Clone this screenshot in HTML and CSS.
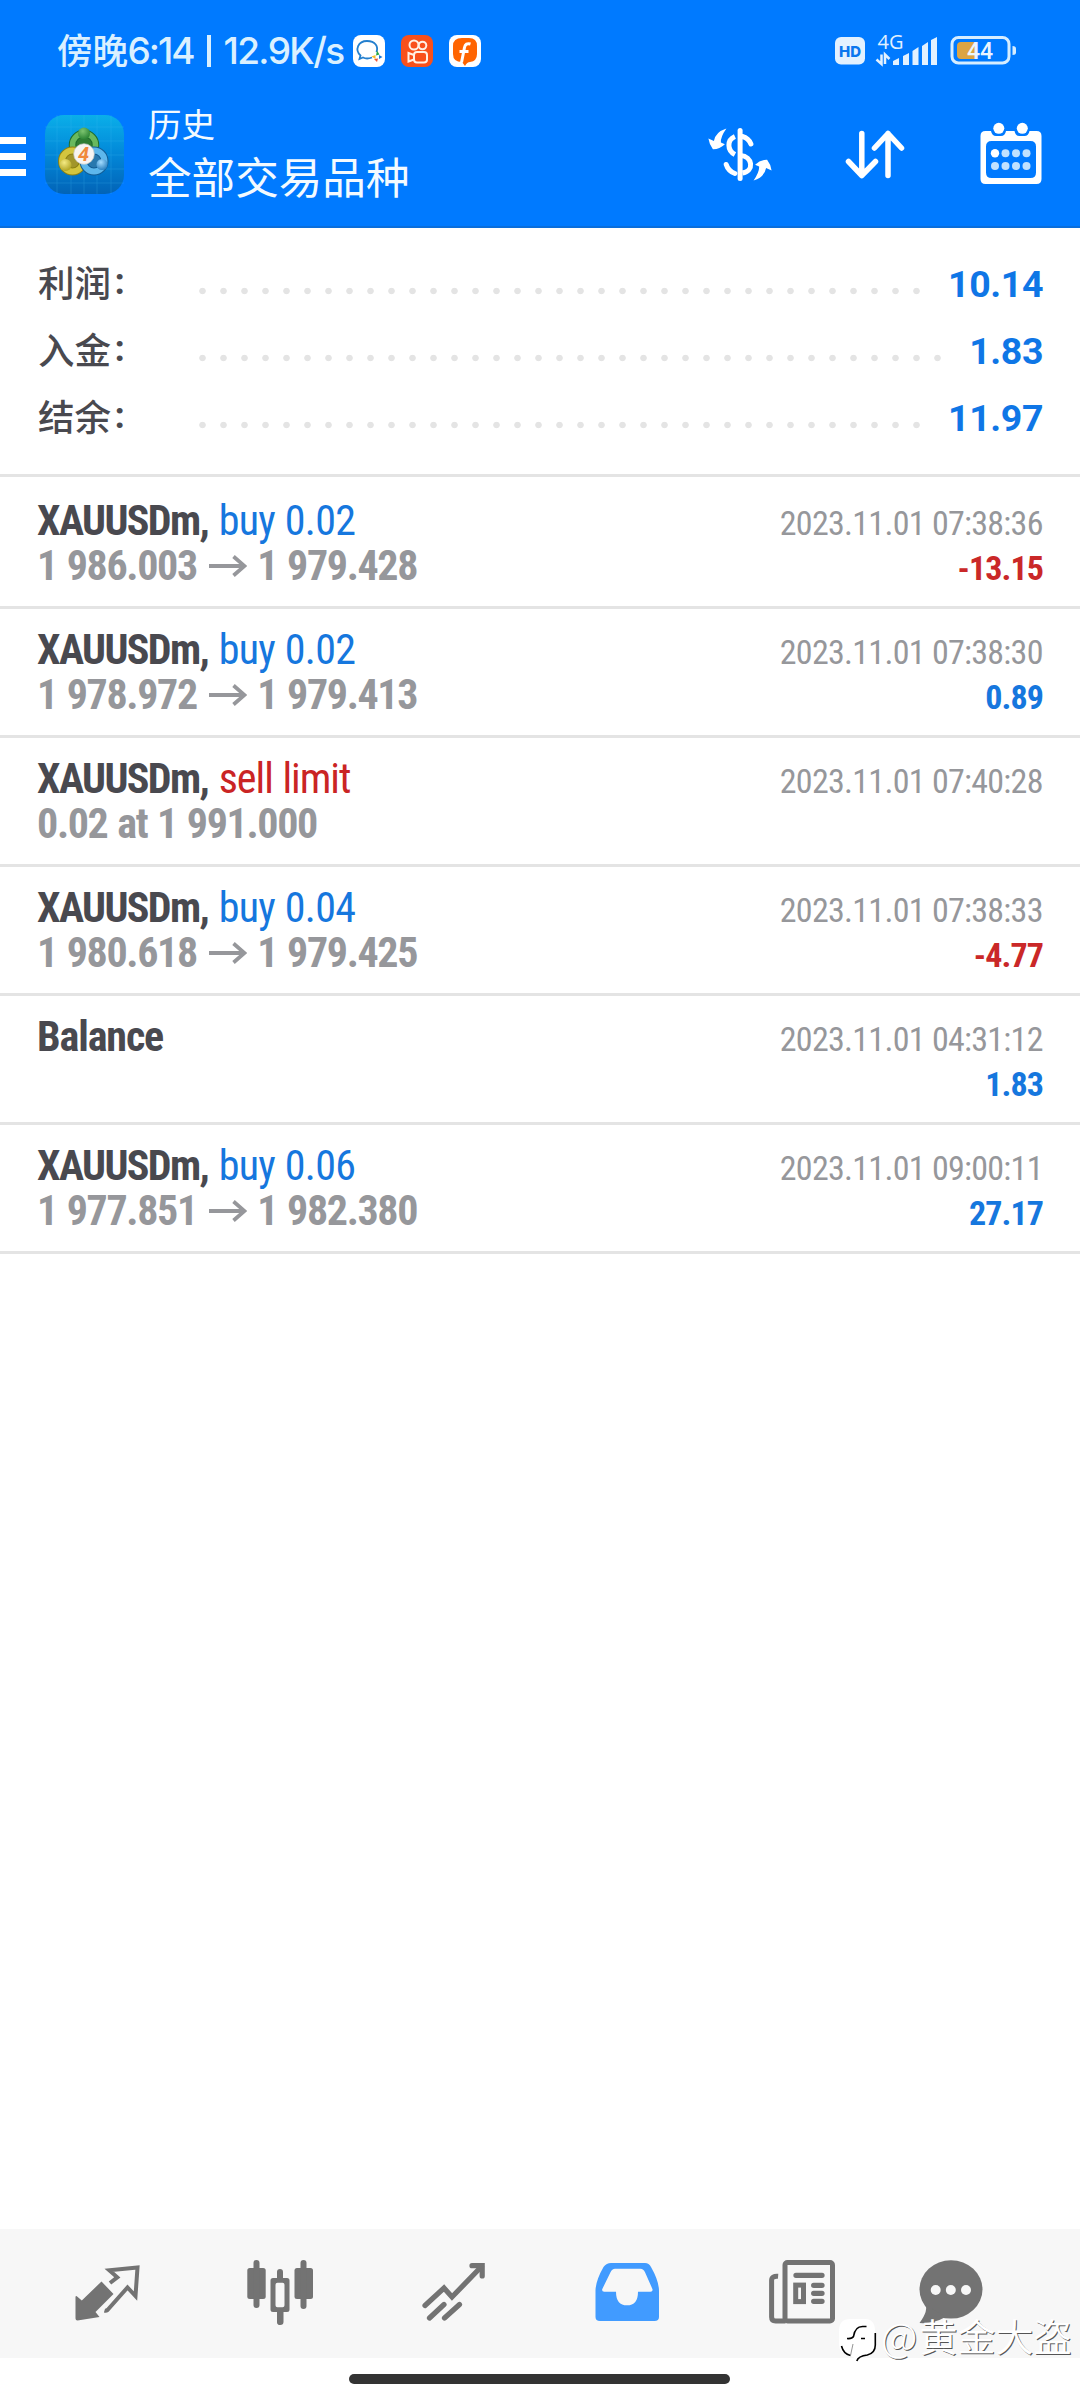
FILE: index.html
```
<!DOCTYPE html>
<html lang="zh-CN">
<head>
<meta charset="utf-8">
<title>历史</title>
<link rel="stylesheet" href="styles.css">
</head>
<body>
<div class="app">
  <header class="header">
    <div class="status">
      <span class="status-cn">傍晚</span><span class="status-time">6:14</span><span class="status-sep"></span><span class="status-speed">12.9K/s</span>
      <div class="notifications">
        <svg width="32" height="32" viewBox="0 0 32 32"><rect width="32" height="32" rx="8" fill="#fff"/><path d="M19 22.500c-4 1.500-6.500 1.300-9 0L6.500 24l1-3.500C1.500 15 5 6 14 6c8.500 0 11.500 5.500 9.500 11" fill="none" stroke="#237fce" stroke-width="1.800"/><path d="M24 15.500l2.500 4-3.500 1z" fill="#27a845"/><path d="M26 20l3.500 2-3.500 2z" fill="#1d79d8"/><path d="M25 23.500l-1 3.500-3-3z" fill="#ee5638"/><path d="M18.500 21.500l4-1.500v4z" fill="#f6bd27"/></svg>
        <svg width="32" height="32" viewBox="0 0 32 32"><rect width="32" height="32" rx="8" fill="#f9501b"/><g fill="none" stroke="#fff0e4" stroke-width="2"><circle cx="13" cy="10" r="4.500"/><circle cx="21.500" cy="10.500" r="3.800"/><rect x="13" y="17" width="13" height="10.500" rx="3"/><path d="M13 20l-5.500-2v8.500l5.500-2"/></g></svg>
        <svg width="32" height="32" viewBox="0 0 32 32"><rect width="32" height="32" rx="8" fill="#fff"/><path d="M13 3h7q8 0 8 8v8q0 7-7 8-3 0-5 4l-3-4q-9 0-9-8v-8q0-8 9-8z" fill="#ff6400"/><path d="M21.500 9q-5-1.500-6 3.500l-3 15M10.500 16.500h9" fill="none" stroke="#fff" stroke-width="3"/></svg>
      </div>
      <div class="status-right">
        <svg width="185" height="60" viewBox="833 21 185 60">
          <rect x="835" y="37" width="30" height="27.500" rx="6" fill="#e2f1ff"/>
          <text x="850" y="56.500" class="hd">HD</text>
          <text x="877.500" y="49" class="net">4G</text>
          <path d="M876.500 59.500l5 4.500v-9.500M885 64v-9.500l4.500 4.500" fill="none" stroke="#e2f1ff" stroke-width="2.500"/>
          <path d="M893 61l6-3v7h-6zM903 56l6-3v12h-6zM912.500 51l6-4v18h-6zM922 46l6-4v23h-6zM931 40l6-3v28h-6z" fill="#e2f1ff"/>
          <rect x="952" y="37.500" width="57" height="25.500" rx="6.500" fill="none" stroke="#d6edff" stroke-width="3"/>
          <path d="M961 42h14.500v17H961q-4 0-4-4v-9q0-4 4-4z" fill="#dca443"/>
          <path d="M1012.500 46q3.500 0 3.500 2.500v4q0 2.500-3.500 2.500z" fill="#d6edff"/>
          <text x="980" y="58.500" class="pct">44</text>
        </svg>
      </div>
    </div>
    <div class="appbar">
      <div class="menu"><i></i><i></i><i></i></div>
      <svg class="logo" width="79" height="79" viewBox="0 0 79 79">
        <defs>
          <linearGradient id="bg" x1="0" y1="0" x2="0" y2="1"><stop offset="0" stop-color="#0aafe9"/><stop offset=".5" stop-color="#0287d8"/><stop offset="1" stop-color="#0263b6"/></linearGradient>
          <radialGradient id="gr" cx=".4" cy=".3" r=".8"><stop offset="0" stop-color="#7cc46f"/><stop offset="1" stop-color="#1f7a2b"/></radialGradient>
          <radialGradient id="ye" cx=".4" cy=".3" r=".8"><stop offset="0" stop-color="#f4ea83"/><stop offset="1" stop-color="#a89b17"/></radialGradient>
          <radialGradient id="bl" cx=".4" cy=".3" r=".8"><stop offset="0" stop-color="#a3dcff"/><stop offset="1" stop-color="#1c75b8"/></radialGradient>
        </defs>
        <rect width="79" height="79" rx="19" fill="url(#bg)"/>
        <path d="M0 12H79M0 26H79M0 40H79M0 54H79M0 68H79M12 0V79M26 0V79M39 0V79M52 0V79M66 0V79" stroke="#46c0f5" stroke-width=".7" opacity=".3"/>
        <circle cx="39" cy="30" r="11.500" fill="#2f7d33" stroke="#1d6b2c" stroke-width="7.500"/><circle cx="39" cy="30" r="11.500" fill="none" stroke="#69b95d" stroke-width="5.500"/>
        <circle cx="27.500" cy="46" r="10.500" fill="#a1952a" stroke="#8c8112" stroke-width="8"/><circle cx="27.500" cy="46" r="10.500" fill="none" stroke="#d3c53e" stroke-width="6"/>
        <circle cx="49" cy="46" r="10.500" fill="#2878ae" stroke="#125c94" stroke-width="8"/><circle cx="49" cy="46" r="10.500" fill="none" stroke="#5db7ec" stroke-width="6"/>
        <circle cx="39" cy="18.500" r="6" fill="url(#gr)"/><circle cx="20.500" cy="50" r="6" fill="url(#ye)"/><circle cx="57" cy="49.500" r="5.500" fill="url(#bl)"/>
        <circle cx="39" cy="39" r="10.300" fill="#f7f4f2" stroke="#c5c8c4" stroke-width=".7"/>
        <text x="38.500" y="46" class="logo-num">4</text>
      </svg>
      <div class="titles"><div class="subtitle">历史</div><div class="title">全部交易品种</div></div>
      <div class="actions">
        <svg width="80" height="80" viewBox="699.600 115 80 80" fill="none" stroke="#fff" stroke-width="5">
          <path d="M739.700 130.500v48" stroke-linecap="round"/>
          <path d="M734.500 136.500C726.500 140 726.500 150 734.500 154.500"/>
          <path d="M742 136.500q6 1.500 8.500 7.500M725.800 164.500q2 6.500 8.700 9" stroke-linecap="round"/>
          <path d="M740 155.500C752.500 156.500 754 171 742 173"/>
          <path id="swirl" d="M726 128.500Q715 132 713.500 141L708 138.500Q709 145 712.500 149.300Q719 149.500 724.500 144.300L720.500 142.500Q720 137 726 128.500z" fill="#fff" stroke="none"/>
          <use href="#swirl" transform="rotate(180 739.600 154.500)"/>
        </svg>
        <svg width="80" height="80" viewBox="835.500 115 80 80" fill="none" stroke="#fff" stroke-width="5.500" stroke-linecap="round" stroke-linejoin="round"><path d="M862.300 133.500v42M849 161.500l13.300 14 13.700-14M888.500 175.500v-42M875 148l13.500-14.500 13.500 14.500"/></svg>
        <svg width="80" height="80" viewBox="970.500 115 80 80">
          <path fill="#fff" fill-rule="evenodd" d="M985 131h5.500q1 5 5 5h5q4 0 5-5h8.500q1 5 5 5h5q4 0 5-5h7q5 0 5 5v43q0 5-5 5h-51q-5 0-5-5v-43q0-5 5-5zM991 141q-5.500 0-5.500 5.500v26q0 5.500 5.500 5.500h39q5.500 0 5.500-5.500v-26q0-5.500-5.500-5.500z"/>
          <circle cx="998.300" cy="128.300" r="5.500" fill="#fff"/><circle cx="1021.800" cy="128.300" r="5.500" fill="#fff"/>
          <g fill="#c0e1ff"><circle cx="994.500" cy="153.300" r="4.200" fill="#fff"/><circle cx="1005" cy="153.300" r="4"/><circle cx="1015.500" cy="153.300" r="4"/><circle cx="1026" cy="153.300" r="4"/><circle cx="994.500" cy="166" r="4"/><circle cx="1005" cy="166" r="4"/><circle cx="1015.500" cy="166" r="4"/><circle cx="1026" cy="166" r="4"/></g>
        </svg>
      </div>
    </div>
  </header>

  <section class="summary">
    <div class="sum-row"><span class="sum-label">利润<b>:</b></span><span class="dots"></span><span class="sum-value">10.14</span></div>
    <div class="sum-row"><span class="sum-label">入金<b>:</b></span><span class="dots"></span><span class="sum-value">1.83</span></div>
    <div class="sum-row"><span class="sum-label">结余<b>:</b></span><span class="dots"></span><span class="sum-value">11.97</span></div>
  </section>

  <main class="deals">
    <article class="deal">
      <div class="line"><span class="symbol">XAUUSDm,</span><span class="side buy">buy 0.02</span><time>2023.11.01 07:38:36</time></div>
      <div class="line"><span class="price">1 986.003</span><svg class="arrow" viewBox="0 0 38 22"><path d="M0 11h35M24.500 1.500l11 9.500-11 9.500"/></svg><span class="price">1 979.428</span><span class="profit loss">-13.15</span></div>
    </article>
    <article class="deal">
      <div class="line"><span class="symbol">XAUUSDm,</span><span class="side buy">buy 0.02</span><time>2023.11.01 07:38:30</time></div>
      <div class="line"><span class="price">1 978.972</span><svg class="arrow" viewBox="0 0 38 22"><path d="M0 11h35M24.500 1.500l11 9.500-11 9.500"/></svg><span class="price">1 979.413</span><span class="profit">0.89</span></div>
    </article>
    <article class="deal">
      <div class="line"><span class="symbol">XAUUSDm,</span><span class="side sell">sell limit</span><time>2023.11.01 07:40:28</time></div>
      <div class="line"><span class="price">0.02 at 1 991.000</span></div>
    </article>
    <article class="deal">
      <div class="line"><span class="symbol">XAUUSDm,</span><span class="side buy">buy 0.04</span><time>2023.11.01 07:38:33</time></div>
      <div class="line"><span class="price">1 980.618</span><svg class="arrow" viewBox="0 0 38 22"><path d="M0 11h35M24.500 1.500l11 9.500-11 9.500"/></svg><span class="price">1 979.425</span><span class="profit loss">-4.77</span></div>
    </article>
    <article class="deal">
      <div class="line"><span class="symbol entry">Balance</span><time>2023.11.01 04:31:12</time></div>
      <div class="line"><span class="profit">1.83</span></div>
    </article>
    <article class="deal">
      <div class="line"><span class="symbol">XAUUSDm,</span><span class="side buy">buy 0.06</span><time>2023.11.01 09:00:11</time></div>
      <div class="line"><span class="price">1 977.851</span><svg class="arrow" viewBox="0 0 38 22"><path d="M0 11h35M24.500 1.500l11 9.500-11 9.500"/></svg><span class="price">1 982.380</span><span class="profit">27.17</span></div>
    </article>
  </main>

  <nav class="tabs">
    <div class="tab"><svg viewBox="67.500 9 80 129"><path d="M77 76l5.300 4.500L102 61.500l12 12.500-18 18 4 5-22 3.500q-2 0-2-2V76.500z" fill="#737373"/><path d="M110.500 63l7.300-5.700-8-7L138 47.500l-2 28.500-8-8.500L108 90q-1.500 1-3 .5" fill="none" stroke="#737373" stroke-width="4"/></svg></div>
    <div class="tab"><svg viewBox="240 9 80 129" fill="#737373"><rect x="247.300" y="48" width="18.400" height="31" rx="2.500"/><rect x="253.500" y="40" width="6" height="48" rx="3"/><rect x="294.500" y="48" width="18.500" height="31" rx="2.500"/><rect x="300.500" y="40" width="6" height="49" rx="3"/><path d="M277 58v-6q0-3 3-3t3 3v6h4q2.500 0 2.500 2.500v29q0 2.500-2.500 2.500h-3.500v10q0 3-3.300 3t-3.200-3V92H273q-2.500 0-2.500-2.500v-29q0-2.500 2.500-2.500zM277.500 62.700q-2 0-2 2v20.600q0 2 2 2h5q2 0 2-2V64.700q0-2-2-2z" fill-rule="evenodd"/></svg></div>
    <div class="tab"><svg viewBox="412.500 9 80 129" fill="none" stroke="#737373" stroke-width="5.200" stroke-linecap="round"><path d="M424.500 85.500l19-17.500 8 9L481 46.500M429 98l14.500-13.500M444 98l15-13.500"/><path d="M471.500 45.700h10.200V56"/></svg></div>
    <div class="tab"><svg viewBox="587 9 80 129"><path fill="#419bff" fill-rule="evenodd" d="M611 43h34q4 0 6 4 8 14 8 24v26q0 4-4.500 4h-54.500q-4.500 0-4.500-4V71q0-10 8-24 3-4 7.500-4zM615 48.700q-3 0-4.500 3.500l-8.300 17q-.5 2.500 2 2.500H616q0 13.600 11 13.600t11-13.600h12.500q2.500 0 2-2.500L645 52.200q-1.500-3.500-4.500-3.500z"/></svg></div>
    <div class="tab"><svg viewBox="760.500 9 80 129" fill="none" stroke="#737373" stroke-width="5"><rect x="784.500" y="42.500" width="47.500" height="58.500" rx="2.500"/><path d="M777.600 56.300q-6.500-.5-6.500 4V97q0 4 4 4h10"/><path d="M795.500 55.300h26M813.200 65.300h8.300M813.200 73.300h8.300M813.200 81.300h8.300" stroke-width="5.300" stroke-linecap="round"/><rect x="795.200" y="65.100" width="7.800" height="16.500"/></svg></div>
    <div class="tab last"><svg viewBox="911 9 80 129"><ellipse cx="951" cy="69.400" rx="31.500" ry="29.200" fill="#737373"/><path d="M925 84q4 6-5.500 19 14 1 26-6z" fill="#737373"/><circle cx="935.700" cy="70" r="5" fill="#f7f7f7"/><circle cx="950.800" cy="70" r="5" fill="#f7f7f7"/><circle cx="966" cy="70" r="5" fill="#f7f7f7"/></svg></div>
  </nav>
  <div class="gesture"><span></span></div>

  <div class="watermark">
    <svg width="40" height="46" viewBox="0 0 40 46"><path d="M12 1h15q10 0 10 12v14q0 9-9 10-6 1-8 5l-7-4Q1 36 1 27V13Q1 1 12 1z" fill="#fff"/><path d="M9 20.500q5 .5 6.500-2 1.500-10 9-10h4M23 20.500h4M37.300 15v12q0 8-8 10-9 1-10.500 6M3.500 28q2 8 9 9.500" fill="none" stroke="#000" stroke-width="1.600"/><path d="M12.500 37.500L15 26" fill="none" stroke="#777" stroke-width=".8"/></svg>
    <span class="at">@</span><span class="who">黄金大盗</span>
  </div>
</div>
</body>
</html>
```
FILE: styles.css
```
* { box-sizing: border-box; }
body { margin: 0; background: #fff; font-family: Roboto, "Noto Sans CJK SC", sans-serif; }
svg { display: block; flex: none; }
.app { position: relative; width: 1080px; height: 2400px; display: flex; flex-direction: column; overflow: hidden; background: #fff; }

.header { height: 228px; background: #007aff; border-bottom: 2px solid #0a6edb; color: #f3faff; flex: none; }
.status { height: 102px; padding: 0 62px 0 57px; display: flex; align-items: center; color: #daf0ff; white-space: nowrap; }
.status-cn { font: 500 35.500px/40px "Noto Sans CJK SC", sans-serif; width: 70.400px; margin-top: -4px; }
.status-time, .status-speed { font: 500 37px/40px Inter, sans-serif; }
.status-time { width: 80px; letter-spacing: -2px; }
.status-sep { width: 4px; height: 32px; background: #daf0ff; }
.status-speed { width: 130px; margin-left: 12px; letter-spacing: -1.600px; }
.notifications { display: flex; gap: 16px; }
.status-right { margin-left: auto; }
.hd { font: 800 15px Inter, sans-serif; fill: #0a76ee; text-anchor: middle; }
.net { font: 500 20px "Open Sans", sans-serif; fill: #e2f1ff; }
.pct { font: 500 23px Roboto, sans-serif; fill: #eaf6ff; text-anchor: middle; }

.appbar { display: flex; height: 124px; align-items: flex-start; padding-right: 29.500px; }
.menu { width: 26px; margin-top: 35px; display: flex; flex-direction: column; gap: 8.500px; }
.menu i { height: 7.300px; background: #fff; }
.logo { margin: 13px 0 0 19px; }
.logo-num { font: italic 700 20px Roboto, sans-serif; fill: #f08a3c; text-anchor: middle; }
.titles { margin: 1px 0 0 24px; font-family: "Noto Sans CJK SC", sans-serif; white-space: nowrap; }
.subtitle { font-size: 33.500px; line-height: 40px; }
.title { font-size: 43.600px; line-height: 54px; margin-top: 5px; }
.actions { margin: 13px 0 0 auto; display: flex; gap: 55.500px; }

.summary { height: 249px; padding: 21px 37px 0 38px; border-bottom: 3px solid #e4e4e4; color: #49494f; flex: none; }
.sum-row { height: 67px; display: flex; align-items: center; }
.sum-label { width: 154px; margin-top: -3px; font: 500 36.500px/67px "Noto Sans CJK SC", sans-serif; display: flex; }
.sum-label b { font: 700 37px/67px Roboto, sans-serif; margin-left: 3.500px; }
.dots { flex: 1; height: 10px; margin: 17px 23.500px 0 0; background: radial-gradient(circle at 10.500px 5px, #e4e4e4 2.900px, transparent 3.600px) 0 0 / 21px 10px repeat-x; }
.sum-value { font: 700 37.500px/67px Roboto, sans-serif; color: #0f76e6; letter-spacing: -.4px; margin-top: 3px; }

.deals { padding-top: 3px; }
.deal { height: 129px; padding: 18px 37px 0; border-bottom: 3px solid #e4e4e4; }
.line { display: flex; height: 45px; line-height: 45px; align-items: baseline; font-family: "Roboto Condensed", Roboto, sans-serif; font-size: 42px; white-space: pre; }
.line::before { content: "\200b"; }
.symbol { font-weight: 700; color: #49494f; letter-spacing: -1.600px; }
.entry { letter-spacing: -1.100px; }
.side { margin-left: 10.500px; letter-spacing: -.75px; word-spacing: 1px; }
.buy { color: #1677de; }
.sell { color: #ca2424; letter-spacing: -1px; }
time { margin-left: auto; font-size: 34px; color: #96979b; letter-spacing: -.72px; margin-right: .3px; }
.price { font-weight: 700; color: #96979b; letter-spacing: -1.350px; word-spacing: 1.500px; }
.arrow { width: 38px; height: 22px; margin: 0 10.500px 0 12px; align-self: center; fill: none; stroke: #96979b; stroke-width: 3.800; }
.profit { margin-left: auto; font-size: 34px; font-weight: 700; color: #1677de; letter-spacing: -.9px; }
.loss { color: #ca2828; }

.tabs { margin-top: auto; height: 129px; background: #f7f7f7; display: flex; padding-left: 20px; flex: none; }
.tab { width: 173.400px; display: flex; justify-content: center; }
.tab.last { width: 129px; }
.tab svg { width: 80px; height: 129px; }
.tabs .tab:nth-child(5) svg { margin-left: 2px; }
.gesture { height: 42px; padding: 16px 0 0 348.500px; flex: none; }
.gesture span { display: block; width: 381px; height: 10px; border-radius: 5px; background: #333; }

.watermark { position: absolute; left: 838px; top: 2315px; display: flex; align-items: center; height: 40px; color: #fff; font-family: "Noto Sans CJK SC", sans-serif; white-space: nowrap; text-shadow: 1px 1px 0 #555; }
.watermark svg { margin-top: 12px; }
.at { font-size: 40px; line-height: 40px; margin-left: 3px; width: 38.500px; font-weight: 300; }
.who { font-size: 38px; line-height: 40px; font-weight: 350; }
```
